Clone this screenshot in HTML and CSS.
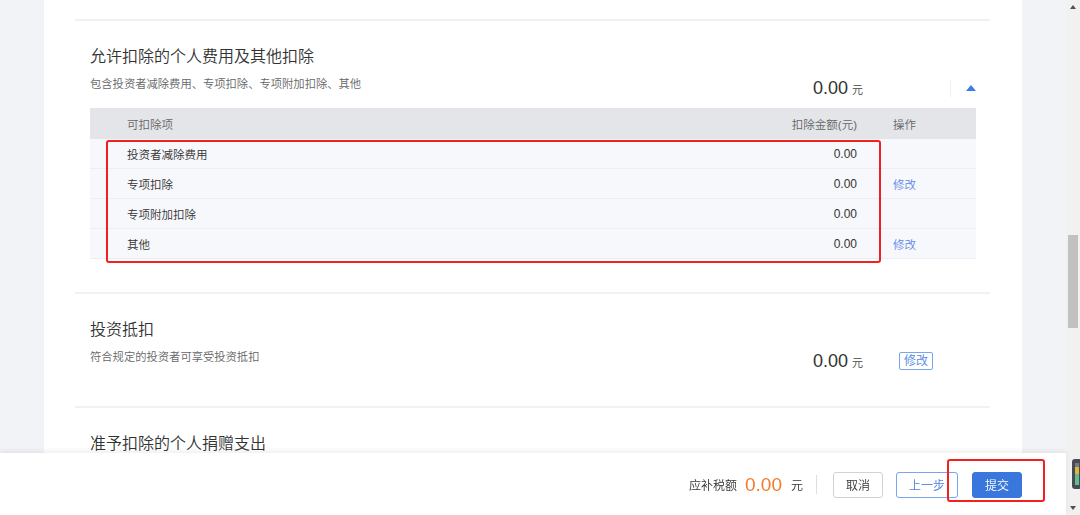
FILE: index.html
```html
<!DOCTYPE html>
<html lang="zh-CN">
<head>
<meta charset="utf-8">
<title>扣除项</title>
<link rel="stylesheet" href="styles.css">
</head>
<body>
<div class="viewport">
  <div class="main">
    <div class="card">
      <section class="block block-first">
        <div class="block-head">
          <div class="head-text">
            <h2 class="block-title">允许扣除的个人费用及其他扣除</h2>
            <p class="block-sub">包含投资者减除费用、专项扣除、专项附加扣除、其他</p>
          </div>
          <div class="head-right">
            <span class="amount"><span class="amount-num">0.00</span><span class="amount-unit">元</span></span>
            <span class="v-divider"></span>
            <span class="toggle"></span>
          </div>
        </div>
        <div class="table">
          <div class="tr th">
            <div class="td c1">可扣除项</div>
            <div class="td c2">扣除金额(元)</div>
            <div class="td c3">操作</div>
          </div>
          <div class="tr">
            <div class="td c1">投资者减除费用</div>
            <div class="td c2 num">0.00</div>
            <div class="td c3"></div>
          </div>
          <div class="tr">
            <div class="td c1">专项扣除</div>
            <div class="td c2 num">0.00</div>
            <div class="td c3"><a class="link">修改</a></div>
          </div>
          <div class="tr">
            <div class="td c1">专项附加扣除</div>
            <div class="td c2 num">0.00</div>
            <div class="td c3"></div>
          </div>
          <div class="tr">
            <div class="td c1">其他</div>
            <div class="td c2 num">0.00</div>
            <div class="td c3"><a class="link">修改</a></div>
          </div>
          <div class="mark mark-table"></div>
        </div>
      </section>
      <section class="block block-second">
        <div class="block-head">
          <div class="head-text">
            <h2 class="block-title">投资抵扣</h2>
            <p class="block-sub">符合规定的投资者可享受投资抵扣</p>
          </div>
          <div class="head-right head-right-btn">
            <span class="amount"><span class="amount-num">0.00</span><span class="amount-unit">元</span></span>
            <span class="btn-edit">修改</span>
          </div>
        </div>
      </section>
      <section class="block">
        <div class="block-head">
          <div class="head-text">
            <h2 class="block-title">准予扣除的个人捐赠支出</h2>
          </div>
        </div>
      </section>
    </div>
  </div>
  <div class="scrollbar">
    <span class="sb-up"></span>
    <span class="sb-thumb"></span>
    <span class="sb-down"></span>
  </div>
</div>
<div class="gadget"><span></span></div>
<footer class="footer">
  <span class="tax-label">应补税额</span>
  <span class="tax-num">0.00</span>
  <span class="tax-unit">元</span>
  <span class="f-divider"></span>
  <button class="btn btn-cancel">取消</button>
  <button class="btn btn-prev">上一步</button>
  <button class="btn btn-submit">提交</button>
  <div class="mark mark-submit"></div>
</footer>
</body>
</html>
```

FILE: styles.css
```css
* { box-sizing: border-box; }
html, body { margin: 0; padding: 0; }
body {
  width: 1080px;
  height: 515px;
  overflow: hidden;
  font-family: "Liberation Sans", "Noto Sans CJK SC", sans-serif;
  font-weight: 350;
  color: #333;
  background: #f2f3f7;
}
.viewport {
  display: flex;
  height: 515px;
}
.main {
  width: 1066px;
  height: 515px;
  padding-left: 44px;
  overflow: hidden;
  background: #f2f3f7;
}
.card {
  width: 978px;
  height: 515px;
  background: #fff;
  padding: 19px 32px 0 31px;
}
.block {
  border-top: 2px solid #f0f1f3;
  padding: 25px 14px 33px 15px;
}
.block-head {
  display: flex;
  align-items: flex-start;
}
.head-text { flex: 1; }
.block-title {
  margin: 0;
  font-size: 16px;
  line-height: 22px;
  font-weight: 350;
  color: #333;
}
.block-sub {
  margin: 8px 0 0;
  font-size: 11.3px;
  line-height: 16px;
  color: #666;
}
.head-right {
  display: flex;
  align-items: center;
  margin-top: 30px;
  height: 24px;
}
.head-right-btn { margin-right: 43px; }
.amount {
  display: flex;
  align-items: baseline;
  color: #333;
}
.amount-num {
  font-size: 18px;
  line-height: 24px;
  font-weight: 400;
}
.amount-unit {
  font-size: 11px;
  margin-left: 4px;
  color: #444;
}
.v-divider {
  width: 1px;
  height: 17px;
  background: #efefef;
  margin-left: 87px;
}
.toggle {
  width: 0;
  height: 0;
  margin-left: 15px;
  border-left: 5px solid transparent;
  border-right: 5px solid transparent;
  border-bottom: 6px solid #3b7ce6;
}
.btn-edit {
  margin-left: 36px;
  width: 34px;
  height: 18px;
  border: 1px solid #7aa6f0;
  border-radius: 2px;
  color: #4f84e6;
  font-size: 12px;
  line-height: 16px;
  text-align: center;
}
.table {
  position: relative;
  margin-top: 8px;
  font-size: 11.5px;
}
.tr {
  display: flex;
  align-items: center;
  height: 30px;
  background: #f7f8fc;
  border-bottom: 1px solid #eceef3;
}
.tr.th {
  height: 31px;
  background: #e4e5e9;
  border-bottom: none;
  color: #666;
}
.td.c1 { flex: 1; padding-left: 37px; }
.td.c2 { width: 200px; text-align: right; }
.td.c3 { width: 119px; padding-left: 36px; }
.num { font-size: 12px; }
.link { color: #5b86e5; cursor: pointer; }
.mark {
  position: absolute;
  border: 2px solid #f2201f;
  border-radius: 3px;
  pointer-events: none;
}
.mark-table {
  left: 16px;
  top: 32px;
  width: 775px;
  height: 123px;
}
.scrollbar {
  width: 14px;
  height: 515px;
  background: #f1f1f1;
  display: flex;
  flex-direction: column;
  align-items: center;
}
.sb-up {
  margin-top: 5px;
  width: 0; height: 0;
  border-left: 3.5px solid transparent;
  border-right: 3.5px solid transparent;
  border-bottom: 4px solid #505050;
}
.sb-thumb {
  margin-top: 226px;
  width: 10px;
  height: 93px;
  background: #c1c1c1;
}
.sb-down {
  margin-top: auto;
  margin-bottom: 5px;
  width: 0; height: 0;
  border-left: 3.5px solid transparent;
  border-right: 3.5px solid transparent;
  border-top: 4px solid #505050;
}
.gadget {
  position: absolute;
  left: 1072px;
  top: 459px;
  width: 10px;
  height: 30px;
  background: #474b55;
  border-radius: 3px;
  padding: 4px 0 4px 3px;
}
.gadget span {
  display: block;
  width: 4px;
  height: 100%;
  background: linear-gradient(to bottom, #7a7a7a 0 20%, #d9b93c 20% 50%, #5fbf8a 50% 100%);
}
.footer {
  position: fixed;
  left: 0;
  bottom: 0;
  width: 1066px;
  height: 62px;
  background: #fff;
  box-shadow: 0 -2px 5px rgba(0, 0, 0, 0.07);
  display: flex;
  align-items: center;
  justify-content: flex-end;
  padding-right: 44px;
  padding-top: 1px;
}
.tax-label {
  font-size: 12px;
  color: #333;
}
.tax-num {
  margin-left: 8px;
  font-size: 19px;
  font-weight: 400;
  color: #f27b2c;
}
.tax-unit {
  margin-left: 9px;
  font-size: 12px;
  color: #333;
}
.f-divider {
  width: 1px;
  height: 19px;
  background: #dedede;
  margin-left: 13px;
  margin-right: 16px;
}
.btn {
  height: 26px;
  padding: 0;
  border-radius: 3px;
  font-family: "Liberation Sans", "Noto Sans CJK SC", sans-serif;
  font-weight: 350;
  font-size: 12px;
  background: #fff;
  cursor: pointer;
}
.btn-cancel {
  width: 50px;
  border: 1px solid #d2d2d2;
  color: #333;
}
.btn-prev {
  width: 62px;
  margin-left: 13px;
  border: 1px solid #7aa4ef;
  color: #4a7fe0;
}
.btn-submit {
  width: 50px;
  margin-left: 14px;
  border: 1px solid #3a77dc;
  background: #3a77dc;
  color: #fff;
}
.mark-submit {
  left: 947px;
  top: 6px;
  width: 98px;
  height: 43px;
}
```
